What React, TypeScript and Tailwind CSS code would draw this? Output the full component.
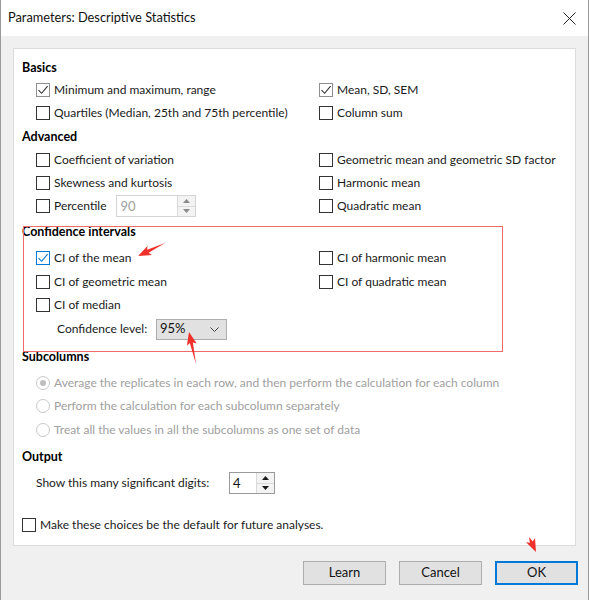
import React from 'react';

const FONT = "font-['Lato','Noto_Sans',sans-serif]";

interface BoxProps {
    checked?: boolean;
    focus?: boolean;
}

const CheckBox = ({ checked, focus }: BoxProps) => {
    const border = focus ? 'border-[#0078d7]' : checked ? 'border-[#8f8f8f]' : 'border-[#333333]';
    const stroke = focus ? '#0078d7' : '#333333';
    return (
        <span className={`flex h-[14px] w-[14px] shrink-0 items-center justify-center border bg-white ${border}`}>
            {checked && (
                <svg width="12" height="12" viewBox="0 0 12 12">
                    <path d="M1.5 6.2 L4.6 9.3 L10.6 2.2" fill="none" stroke={stroke} strokeWidth="1.1" />
                </svg>
            )}
        </span>
    );
};

const Check = ({ label, checked, focus }: { label: string; checked?: boolean; focus?: boolean }) => (
    <div className="flex items-center gap-[4px] whitespace-nowrap">
        <CheckBox checked={checked} focus={focus} />
        <span>{label}</span>
    </div>
);

const Radio = ({ label, selected }: { label: string; selected?: boolean }) => (
    <div className="flex items-center gap-[4px] whitespace-nowrap text-[#a0a0a0]">
        <span className="flex h-[14px] w-[14px] shrink-0 items-center justify-center rounded-full border border-[#c8c8c8] bg-white">
            {selected && <span className="h-[6px] w-[6px] rounded-full bg-[#bdbdbd]" />}
        </span>
        <span>{label}</span>
    </div>
);

// little up/down triangles used by the spin boxes
const Tri = ({ up, color }: { up?: boolean; color: string }) => (
    <svg width="7" height="4" viewBox="0 0 7 4">
        <path d={up ? 'M0 4 L3.5 0 L7 4 Z' : 'M0 0 L3.5 4 L7 0 Z'} fill={color} />
    </svg>
);

const Spinner = ({ value, width, disabled }: { value: string; width: string; disabled?: boolean }) => {
    const arrow = disabled ? '#8a8a8a' : '#1a1a1a';
    return (
        <div className={`flex h-[22px] ${width} shrink-0 border ${disabled ? 'border-[#d4d4d4]' : 'border-[#9a9a9a]'} bg-white`}>
            <span className={`flex-1 pl-[3px] text-[13px] leading-[20px] ${disabled ? 'text-[#a0a0a0]' : 'text-[#111]'}`}>{value}</span>
            <div className="flex w-[18px] flex-col border-l border-[#d9d9d9] bg-[#f3f3f3]">
                <div className="flex flex-1 items-center justify-center border-b border-[#d9d9d9]">
                    <Tri up color={arrow} />
                </div>
                <div className="flex flex-1 items-center justify-center">
                    <Tri color={arrow} />
                </div>
            </div>
        </div>
    );
};

const Heading = ({ children, h }: { children: React.ReactNode; h: string }) => (
    <div className={`flex ${h} items-center text-[12.5px] font-bold text-[#000]`}>{children}</div>
);

const Row = ({ h, left, right }: { h: string; left: React.ReactNode; right?: React.ReactNode }) => (
    <div className={`grid ${h} grid-cols-[283px_1fr] items-center pl-[14px]`}>
        <div>{left}</div>
        <div>{right}</div>
    </div>
);

const Button = ({ label, primary }: { label: string; primary?: boolean }) => (
    <button
        type="button"
        className={`h-[24px] w-[83px] bg-[#e1e1e1] text-[13px] text-[#111] ${primary ? 'border-2 border-[#0078d7]' : 'border border-[#adadad]'}`}
    >
        {label}
    </button>
);

// annotation arrow: tapered shaft with a swept head
const arrowPoints = (tx: number, ty: number, hx: number, hy: number) => {
    const dx = hx - tx;
    const dy = hy - ty;
    const len = Math.hypot(dx, dy);
    const ux = dx / len;
    const uy = dy / len;
    const nx = -uy;
    const ny = ux;
    const headLen = 11;
    const headW = 5;
    const shaftW = 1.6;
    const bx = hx - ux * headLen;
    const by = hy - uy * headLen;
    const wx = hx - ux * (headLen + 2);
    const wy = hy - uy * (headLen + 2);
    const pts = [
        [tx, ty],
        [bx + nx * shaftW, by + ny * shaftW],
        [wx + nx * headW, wy + ny * headW],
        [hx, hy],
        [wx - nx * headW, wy - ny * headW],
        [bx - nx * shaftW, by - ny * shaftW],
    ];
    return pts.map((p) => `${p[0].toFixed(1)},${p[1].toFixed(1)}`).join(' ');
};

const ARROWS = [
    [164, 243, 137, 256],
    [195, 364, 188, 332],
    [528, 537, 535, 552],
];

export default function App() {
    return (
        <div className={`relative h-[600px] w-[589px] overflow-hidden border-x border-[#9a9a9a] bg-[#f0f0f0] text-[12px] text-[#1a1a1a] ${FONT}`}>
            {/* title bar */}
            <div className="flex h-[36px] items-center justify-between bg-white pl-[7px] pr-[12px]">
                <span className="text-[12.8px] text-[#111]">Parameters: Descriptive Statistics</span>
                <svg width="13" height="13" viewBox="0 0 13 13">
                    <path d="M0.5 0.5 L12.5 12.5 M12.5 0.5 L0.5 12.5" stroke="#222" strokeWidth="1" />
                </svg>
            </div>

            {/* options panel */}
            <div className="mx-[12px] mt-[12px] h-[498px] border border-[#dcdcdc] bg-white pl-[8px] pt-[8px]">
                <Heading h="h-[22px]">Basics</Heading>
                <Row h="h-[22px]" left={<Check label="Minimum and maximum, range" checked />} right={<Check label="Mean, SD, SEM" checked />} />
                <Row h="h-[24px]" left={<Check label="Quartiles (Median, 25th and 75th percentile)" />} right={<Check label="Column sum" />} />

                <Heading h="h-[24px]">Advanced</Heading>
                <Row h="h-[22px]" left={<Check label="Coefficient of variation" />} right={<Check label="Geometric mean and geometric SD factor" />} />
                <Row h="h-[24px]" left={<Check label="Skewness and kurtosis" />} right={<Check label="Harmonic mean" />} />
                <Row
                    h="h-[22px]"
                    left={
                        <div className="flex items-center gap-[10px]">
                            <Check label="Percentile" />
                            <Spinner value="90" width="w-[80px]" disabled />
                        </div>
                    }
                    right={<Check label="Quadratic mean" />}
                />

                <Heading h="h-[30px]">Confidence intervals</Heading>
                <Row h="h-[22px]" left={<Check label="CI of the mean" checked focus />} right={<Check label="CI of harmonic mean" />} />
                <Row h="h-[26px]" left={<Check label="CI of geometric mean" />} right={<Check label="CI of quadratic mean" />} />
                <Row h="h-[20px]" left={<Check label="CI of median" />} />
                <div className="flex h-[28px] items-center pl-[35px]">
                    <span className="w-[99px] whitespace-nowrap">Confidence level:</span>
                    <div className="flex h-[21px] w-[71px] items-center justify-between border border-[#adadad] bg-[#e1e1e1] pl-[3px] pr-[7px]">
                        <span className="text-[13px] text-[#111]">95%</span>
                        <svg width="9" height="5" viewBox="0 0 9 5">
                            <path d="M0.5 0.5 L4.5 4.5 L8.5 0.5" fill="none" stroke="#444" strokeWidth="1" />
                        </svg>
                    </div>
                </div>

                <Heading h="h-[28px]">Subcolumns</Heading>
                <div className="flex h-[24px] items-center pl-[14px]">
                    <Radio label="Average the replicates in each row, and then perform the calculation for each column" selected />
                </div>
                <div className="flex h-[22px] items-center pl-[14px]">
                    <Radio label="Perform the calculation for each subcolumn separately" />
                </div>
                <div className="flex h-[26px] items-center pl-[14px]">
                    <Radio label="Treat all the values in all the subcolumns as one set of data" />
                </div>

                <Heading h="h-[28px]">Output</Heading>
                <div className="flex h-[24px] items-center pl-[14px]">
                    <span className="w-[193px] whitespace-nowrap">Show this many significant digits:</span>
                    <Spinner value="4" width="w-[46px]" />
                </div>

                <div className="mt-[19px] flex h-[22px] items-center">
                    <Check label="Make these choices be the default for future analyses." />
                </div>
            </div>

            {/* dialog buttons */}
            <div className="mt-[15px] flex justify-end gap-[13px] pr-[10px]">
                <Button label="Learn" />
                <Button label="Cancel" />
                <Button label="OK" primary />
            </div>

            {/* red annotation overlay */}
            <svg className="pointer-events-none absolute left-0 top-0" width="589" height="600">
                <rect x="22.5" y="226.5" width="479" height="125" fill="none" stroke="#f26b6b" strokeWidth="1" />
                {ARROWS.map((a, i) => (
                    <polygon key={i} points={arrowPoints(a[0], a[1], a[2], a[3])} fill="#f0302b" />
                ))}
            </svg>
        </div>
    );
}
